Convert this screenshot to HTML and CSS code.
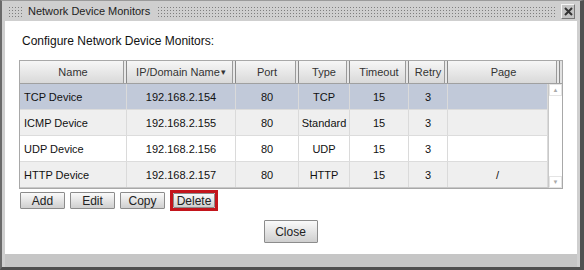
FILE: index.html
```html
<!DOCTYPE html>
<html lang="en">
<head>
    <meta charset="UTF-8">
    <title>Network Device Monitors</title>
    <link rel="stylesheet" href="styles.css">
</head>
<body>
    <div class="window">
        <div class="titlebar">
            <span class="grip grip-left"></span>
            <span class="title">Network Device Monitors</span>
            <span class="grip grip-right"></span>
            <span class="close-x">
                <svg width="9" height="9" viewBox="0 0 9 9"><path d="M1 1L8 8M8 1L1 8" stroke="#333" stroke-width="2"/></svg>
            </span>
        </div>

        <div class="content">
            <p class="heading">Configure Network Device Monitors:</p>

            <div class="grid">
                <div class="head">
                    <div class="hcell">Name</div>
                    <div class="hcell">IP/Domain Name <span class="sort">&#9662;</span></div>
                    <div class="hcell">Port</div>
                    <div class="hcell">Type</div>
                    <div class="hcell">Timeout</div>
                    <div class="hcell">Retry</div>
                    <div class="hcell">Page</div>
                    <div class="hcorner"></div>
                </div>
                <div class="body-wrap">
                    <div class="rows">
                        <div class="row selected">
                            <div class="cell left">TCP Device</div>
                            <div class="cell">192.168.2.154</div>
                            <div class="cell">80</div>
                            <div class="cell">TCP</div>
                            <div class="cell">15</div>
                            <div class="cell">3</div>
                            <div class="cell"></div>
                        </div>
                        <div class="row alt">
                            <div class="cell left">ICMP Device</div>
                            <div class="cell">192.168.2.155</div>
                            <div class="cell">80</div>
                            <div class="cell">Standard</div>
                            <div class="cell">15</div>
                            <div class="cell">3</div>
                            <div class="cell"></div>
                        </div>
                        <div class="row">
                            <div class="cell left">UDP Device</div>
                            <div class="cell">192.168.2.156</div>
                            <div class="cell">80</div>
                            <div class="cell">UDP</div>
                            <div class="cell">15</div>
                            <div class="cell">3</div>
                            <div class="cell"></div>
                        </div>
                        <div class="row alt">
                            <div class="cell left">HTTP Device</div>
                            <div class="cell">192.168.2.157</div>
                            <div class="cell">80</div>
                            <div class="cell">HTTP</div>
                            <div class="cell">15</div>
                            <div class="cell">3</div>
                            <div class="cell">/</div>
                        </div>
                    </div>
                    <div class="scrollbar">
                        <span class="arrow up">&#9650;</span>
                        <span class="arrow down">&#9660;</span>
                    </div>
                </div>
            </div>

            <div class="actions">
                <button class="btn">Add</button>
                <button class="btn">Edit</button>
                <button class="btn">Copy</button>
                <span class="focus-ring"><button class="btn">Delete</button></span>
            </div>

            <div class="bottom">
                <button class="btn btn-close">Close</button>
            </div>
        </div>

        <div class="statusbar"></div>
    </div>
</body>
</html>
```

FILE: styles.css
```css
body { margin: 0; font-family: "Liberation Sans", Arial, sans-serif; background: #6a6a6a; }
.window { width: 584px; height: 270px; box-sizing: border-box; display: flex; flex-direction: column; background: #cfcfcf; border-top: 1px solid #9a9a9a; border-left: 2px solid #6a6a6a; border-right: 4px solid #505050; border-bottom: 3px solid #505050; padding: 0 3px; }

.titlebar { height: 20px; display: flex; align-items: center; padding: 0 2px 0 3px; }
.grip { height: 11px; background-image: radial-gradient(circle, #7e7e7e 0.8px, transparent 0.9px); background-size: 3px 3px; }
.grip-left { width: 14px; }
.grip-right { flex: 1; margin-right: 5px; }
.title { font-size: 11px; color: #222; padding: 0 7px 0 6px; }
.close-x { width: 12px; height: 13px; display: flex; align-items: center; justify-content: center; background: #c4c4c4; border: 1px solid #f4f4f4; border-right-color: #777; border-bottom-color: #777; }

.content { flex: 1; background: #fff; padding: 13px 0 0 14px; display: flex; flex-direction: column; }
.heading { margin: 0 0 11px 3px; font-size: 12px; line-height: 15px; color: #111; }

.grid { width: 544px; border: 1px solid #a8a8a8; box-sizing: border-box; }
.head { display: grid; grid-template-columns: 107px 109px 63px 51px 59px 39px 112px 1fr; height: 22px; background: linear-gradient(#f6f6f6, #d9d9d9); border-bottom: 1px solid #a0a0a0; }
.hcell { font-size: 11px; color: #333; display: flex; align-items: center; justify-content: center; border-right: 1px solid #8a8a8a; box-shadow: inset -2px 0 0 #e8e8e8, inset -3px 0 0 #9a9a9a; }
.sort { font-size: 9px; margin-left: 1px; }
.hcorner { background: #e2e2e2; }

.body-wrap { display: flex; }
.rows { width: 528px; }
.row { display: grid; grid-template-columns: 107px 109px 63px 51px 59px 39px 100px; height: 26px; background: #fff; border-bottom: 1px solid #dcdcdc; box-sizing: border-box; }
.row:last-child { border-bottom: 1px solid #c8c8c8; }
.row.alt { background: #efefef; }
.row.selected { background: #c1c9d9; }
.cell { font-size: 11px; color: #111; display: flex; align-items: center; justify-content: center; border-right: 1px solid #dadada; }
.cell.left { justify-content: flex-start; padding-left: 4px; }
.scrollbar { width: 14px; display: flex; flex-direction: column; justify-content: space-between; background: #fff; border-left: 1px solid #c8c8c8; }
.arrow { font-size: 6px; color: #aaa; height: 10px; display: flex; align-items: center; justify-content: center; border: 1px solid #e4e4e4; }

.actions { display: flex; align-items: center; gap: 5px; margin: 1px 0 0 1px; }
.btn { font-family: "Liberation Sans", Arial, sans-serif; font-size: 12px; color: #222; height: 17px; width: 45px; padding: 0; background: linear-gradient(#fafafa, #cfcfcf); border: 1px solid #8c8c8c; border-radius: 1px; }
.focus-ring { border: 3px solid #c3151c; padding: 0; display: flex; }
.focus-ring .btn { width: 42px; height: 15px; }

.bottom { display: flex; justify-content: center; margin-top: 9px; padding-right: 15px; }
.btn-close { width: 54px; height: 23px; font-size: 12px; }

.statusbar { height: 13px; background: #c6c6c6; }
```
